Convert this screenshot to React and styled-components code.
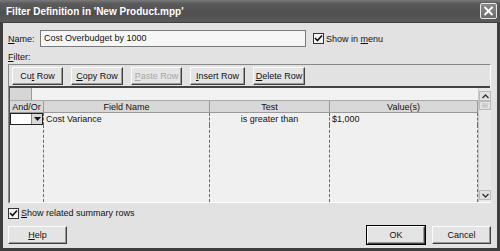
import React from 'react';
import styled, {createGlobalStyle} from 'styled-components';

const GlobalStyle = createGlobalStyle`
  html, body { margin: 0; padding: 0; background: #3a3a3a; }
  body { font-family: "Liberation Sans", Arial, sans-serif; font-size: 9px; color: #111; }
`;

const Window = styled.div`
  width: 500px;
  height: 251px;
  box-sizing: border-box;
  background: #e2e2e2;
  border: 3px solid #3e3e3e;
  border-top: 0;
  display: flex;
  flex-direction: column;
`;

const TitleBar = styled.div`
  height: 22px;
  margin: 0 -3px;
  padding: 0 3px 0 6px;
  display: flex;
  align-items: center;
  justify-content: space-between;
  background: linear-gradient(#7a7a7a 0%, #5c5c5c 15%, #4f4f4f 60%, #5a5a5a 100%);
  border-bottom: 1px solid #3e3e3e;
`;

const Title = styled.span`
  color: #fff;
  font-weight: bold;
  font-size: 10px;
`;

const CloseButton = styled.div`
  width: 17px;
  height: 16px;
  box-sizing: border-box;
  border: 1px solid #e8e8e8;
  border-radius: 2px;
  background: linear-gradient(#8a8a8a, #6a6a6a);
  display: flex;
  align-items: center;
  justify-content: center;
`;

const Body = styled.div`
  flex: 1;
  padding: 7px 6px 0 5px;
  display: flex;
  flex-direction: column;
`;

const NameRow = styled.div`
  display: flex;
  align-items: center;
  height: 17px;
`;

const Label = styled.span`
  width: 32px;
`;

const TextBox = styled.div`
  width: 266px;
  height: 17px;
  box-sizing: border-box;
  border: 1px solid #7a7a7a;
  background: #f6f6f6;
  padding: 1px 3px;
  line-height: 13px;
`;

const CheckRow = styled.div`
  display: flex;
  align-items: center;
  gap: 2px;
  height: 12px;
  margin-left: ${p => p.$offset || 0}px;
`;

const Box = styled.span`
  width: 11px;
  height: 11px;
  box-sizing: border-box;
  border: 1px solid #333;
  background: #f4f4f4;
  display: flex;
  align-items: center;
  justify-content: center;
`;

const FilterLabel = styled.div`
  margin-top: 4px;
  height: 12px;
  line-height: 12px;
`;

const Frame = styled.div`
  margin-top: 1px;
  border-top: 1px solid #888;
  border-left: 1px solid #888;
  border-right: 1px solid #fff;
  display: flex;
  flex-direction: column;
`;

const Toolbar = styled.div`
  height: 21px;
  display: flex;
  align-items: center;
  gap: 8px;
  padding: 0 3px;
  border-bottom: 2px solid #444;
`;

const Button = styled.div`
  width: ${p => p.$w}px;
  height: ${p => p.$h || 18}px;
  box-sizing: border-box;
  display: flex;
  align-items: center;
  justify-content: center;
  white-space: nowrap;
  background: #e4e4e4;
  color: ${p => (p.$disabled ? '#a8a8a8' : '#111')};
  border: 1px solid;
  border-color: #fbfbfb #404040 #404040 #fbfbfb;
  box-shadow: inset -1px -1px 0 #9a9a9a;
  outline: ${p => (p.$default ? '1px solid #000' : 'none')};
  margin-left: ${p => p.$gap || 0}px;
`;

const Grid = styled.div`
  height: 115px;
  box-sizing: border-box;
  display: flex;
  border-left: 1px solid #555;
  border-bottom: 1px solid #fff;
`;

const Main = styled.div`
  flex: 1;
  display: flex;
  flex-direction: column;
`;

const EditBar = styled.div`
  height: 12px;
  display: flex;
  border-bottom: 1px solid #aaa;
  background: #f2f2f2;
`;

const EditCell = styled.div`
  width: 21px;
  background: #d6d6d6;
  border-right: 1px solid #999;
`;

const Columns = styled.div`
  display: grid;
  grid-template-columns: 34px 166px 120px 148px;
  grid-template-rows: 12px 12px 1fr;
  flex: 1;
  background: #f0f0f0;
`;

const Head = styled.div`
  background: #d8d8d8;
  border-right: 1px solid #999;
  border-bottom: 1px solid #999;
  text-align: center;
  line-height: 12px;
`;

const Cell = styled.div`
  border-right: 1px dashed #6a6a6a;
  padding-left: ${p => p.$pad ?? 2}px;
  text-align: ${p => p.$align || 'left'};
  line-height: 12px;
  white-space: nowrap;
`;

const Dropdown = styled.div`
  display: flex;
  height: 12px;
  border: 1px solid #222;
  box-sizing: border-box;
  background: #fff;
  justify-content: flex-end;
`;

const DropArrow = styled.div`
  width: 10px;
  background: #d8d8d8;
  border-left: 1px solid #888;
  display: flex;
  align-items: center;
  justify-content: center;
`;

const Filler = styled.div`
  border-right: 1px dashed #6a6a6a;
`;

const ScrollBar = styled.div`
  width: 13px;
  display: flex;
  flex-direction: column;
  padding: 3px 0 2px;
  background: #e8e8e8;
  border-left: 1px solid #c8c8c8;
`;

const ScrollBtn = styled.div`
  width: 12px;
  height: ${p => p.$h || 10}px;
  box-sizing: border-box;
  border: 1px solid #bbb;
  background: #e2e2e2;
  display: flex;
  align-items: center;
  justify-content: center;
  margin-top: ${p => (p.$push ? 'auto' : '0')};
`;

const Footer = styled.div`
  margin-top: 4px;
`;

const ButtonRow = styled.div`
  margin-top: 7px;
  display: flex;
  align-items: center;
`;

const Spacer = styled.div`
  flex: 1;
`;

const U = styled.span`
  text-decoration: underline;
`;

const Check = () => (
  <svg width="9" height="9" viewBox="0 0 9 9">
    <path d="M1 4 L3.5 6.5 L8 1.5" stroke="#111" strokeWidth="1.6" fill="none" />
  </svg>
);

export default function App() {
  return (
    <>
      <GlobalStyle />
      <Window>
        <TitleBar>
          <Title>Filter Definition in 'New Product.mpp'</Title>
          <CloseButton>
            <svg width="11" height="10" viewBox="0 0 11 10">
              <path d="M1.5 1 L9.5 9 M9.5 1 L1.5 9" stroke="#fff" strokeWidth="1.8" />
            </svg>
          </CloseButton>
        </TitleBar>
        <Body>
          <NameRow>
            <Label><U>N</U>ame:</Label>
            <TextBox>Cost Overbudget by 1000</TextBox>
            <CheckRow $offset={7}>
              <Box><Check /></Box>
              <span>Show in <U>m</U>enu</span>
            </CheckRow>
          </NameRow>
          <FilterLabel><U>F</U>ilter:</FilterLabel>
          <Frame>
            <Toolbar>
              <Button $w={51}><span>Cu<U>t</U> Row</span></Button>
              <Button $w={52}><span><U>C</U>opy Row</span></Button>
              <Button $w={51} $disabled><span><U>P</U>aste Row</span></Button>
              <Button $w={55}><span><U>I</U>nsert Row</span></Button>
              <Button $w={52}><span><U>D</U>elete Row</span></Button>
            </Toolbar>
            <Grid>
              <Main>
                <EditBar><EditCell /></EditBar>
                <Columns>
                  <Head>And/Or</Head>
                  <Head>Field Name</Head>
                  <Head>Test</Head>
                  <Head>Value(s)</Head>
                  <Cell $pad={0}>
                    <Dropdown>
                      <DropArrow>
                        <svg width="7" height="4" viewBox="0 0 7 4"><path d="M0 0 H7 L3.5 4 Z" fill="#111" /></svg>
                      </DropArrow>
                    </Dropdown>
                  </Cell>
                  <Cell>Cost Variance</Cell>
                  <Cell $pad={0} $align="center">is greater than</Cell>
                  <Cell>$1,000</Cell>
                  <Filler />
                  <Filler />
                  <Filler />
                  <Filler />
                </Columns>
              </Main>
              <ScrollBar>
                <ScrollBtn>
                  <svg width="7" height="5" viewBox="0 0 7 5"><path d="M0.5 4 L3.5 1 L6.5 4" stroke="#333" strokeWidth="1.4" fill="none" /></svg>
                </ScrollBtn>
                <ScrollBtn $h={9}>
                  <svg width="6" height="5" viewBox="0 0 6 5"><path d="M0 1 H6 M0 2.5 H6 M0 4 H6" stroke="#bbb" strokeWidth="0.8" /></svg>
                </ScrollBtn>
                <ScrollBtn $push>
                  <svg width="7" height="5" viewBox="0 0 7 5"><path d="M0.5 1 L3.5 4 L6.5 1" stroke="#333" strokeWidth="1.4" fill="none" /></svg>
                </ScrollBtn>
              </ScrollBar>
            </Grid>
          </Frame>
          <Footer>
            <CheckRow>
              <Box><Check /></Box>
              <span><U>S</U>how related summary rows</span>
            </CheckRow>
          </Footer>
          <ButtonRow>
            <Button $w={59}><span><U>H</U>elp</span></Button>
            <Spacer />
            <Button $w={58} $default>OK</Button>
            <Button $w={59} $gap={7}>Cancel</Button>
          </ButtonRow>
        </Body>
      </Window>
    </>
  );
}
